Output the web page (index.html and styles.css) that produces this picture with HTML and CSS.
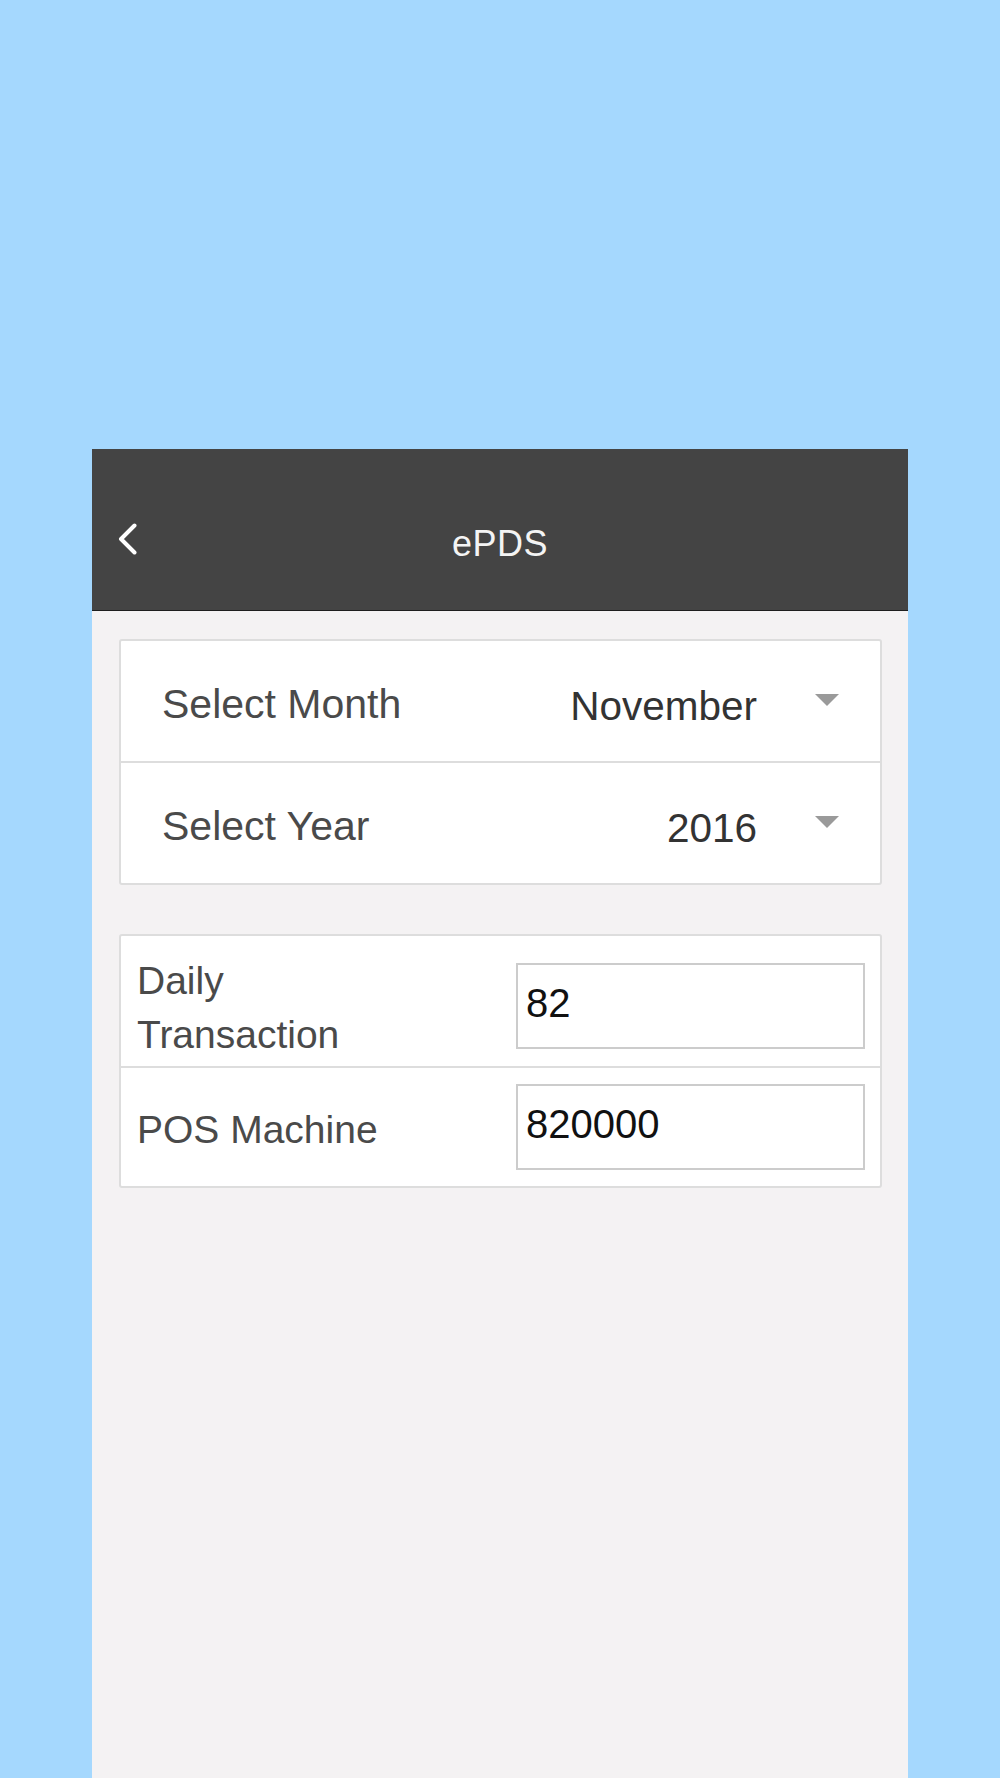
FILE: index.html
```html
<!DOCTYPE html>
<html lang="en">
<head>
<meta charset="utf-8">
<title>ePDS</title>
<link rel="stylesheet" href="styles.css">
</head>
<body>
<div class="phone">
  <header class="topbar">
    <div class="back">
      <svg class="chev" width="20" height="32" viewBox="0 0 20 32" aria-hidden="true">
        <path d="M17.5 2.5 L4 16 L17.5 29.5" fill="none" stroke="#ffffff" stroke-width="4" stroke-linecap="round" stroke-linejoin="round"/>
      </svg>
    </div>
    <div class="title">ePDS</div>
    <div class="spacer"></div>
  </header>
  <main class="content">
    <section class="card">
      <div class="select-row">
        <span class="sel-label">Select Month</span>
        <span class="sel-value">November</span>
        <span class="caret"></span>
      </div>
      <div class="select-row divided">
        <span class="sel-label">Select Year</span>
        <span class="sel-value">2016</span>
        <span class="caret"></span>
      </div>
    </section>
    <section class="card card-gap">
      <div class="field-row first">
        <label class="field-label">Daily<br>Transaction</label>
        <input class="field lift" type="text" value="82">
      </div>
      <div class="field-row divided">
        <label class="field-label single">POS Machine</label>
        <input class="field" type="text" value="820000">
      </div>
    </section>
  </main>
</div>
</body>
</html>
```

FILE: styles.css
```css
html, body {
  margin: 0;
  padding: 0;
}
body {
  background: #a5d8fe;
  font-family: "Liberation Sans", Arial, sans-serif;
  padding-top: 449px;
  display: flex;
  justify-content: center;
  height: 1329px;
  overflow: hidden;
}
.phone {
  width: 816px;
  height: 1329px;
  background: #f4f2f3;
  display: flex;
  flex-direction: column;
}
.topbar {
  height: 162px;
  box-sizing: border-box;
  padding-top: 18px;
  background: #444444;
  border-bottom: 1px solid #1e1e1e;
  display: grid;
  grid-template-columns: 1fr auto 1fr;
  align-items: center;
}
.back {
  padding-left: 25px;
  display: flex;
  align-items: center;
}
.chev {
  display: block;
}
.title {
  color: #f4f4f4;
  font-size: 36px;
  line-height: 1;
  margin-top: 10px;
  letter-spacing: 0.5px;
}
.content {
  padding: 28px 26px 0 27px;
}
.card {
  background: #ffffff;
  border: 2px solid #dddddd;
  border-radius: 3px;
}
.card-gap {
  margin-top: 49px;
}
.select-row {
  height: 120px;
  display: flex;
  align-items: center;
  padding: 0 41px 0 41px;
}
.divided {
  border-top: 2px solid #dddddd;
}
.sel-label {
  flex: 1;
  font-size: 41px;
  color: #4a4a4a;
  padding-top: 6px;
}
.sel-value {
  font-size: 40.5px;
  color: #333333;
  padding-top: 10px;
  margin-right: 58px;
}
.caret {
  width: 0;
  height: 0;
  border-left: 12px solid transparent;
  border-right: 12px solid transparent;
  border-top: 12px solid #9a9a9a;
  margin-top: -2px;
}
.field-row {
  display: flex;
  align-items: center;
  padding: 16px 15px 16px 16px;
}
.field-row.first {
  padding-top: 18px;
  padding-bottom: 4px;
}
.field-label {
  flex: 1;
  font-size: 39px;
  line-height: 54px;
  color: #4a4a4a;
}
.field-label.single {
  padding-top: 6px;
}
.field {
  width: 349px;
  height: 86px;
  box-sizing: border-box;
  border: 2px solid #cccccc;
  border-radius: 0;
  padding: 0 8px 6px 8px;
  margin: 0;
  font-family: "Liberation Sans", Arial, sans-serif;
  font-size: 40px;
  color: #111111;
  background: #ffffff;
  outline: none;
}
.field.lift {
  margin-bottom: 4px;
}
```
